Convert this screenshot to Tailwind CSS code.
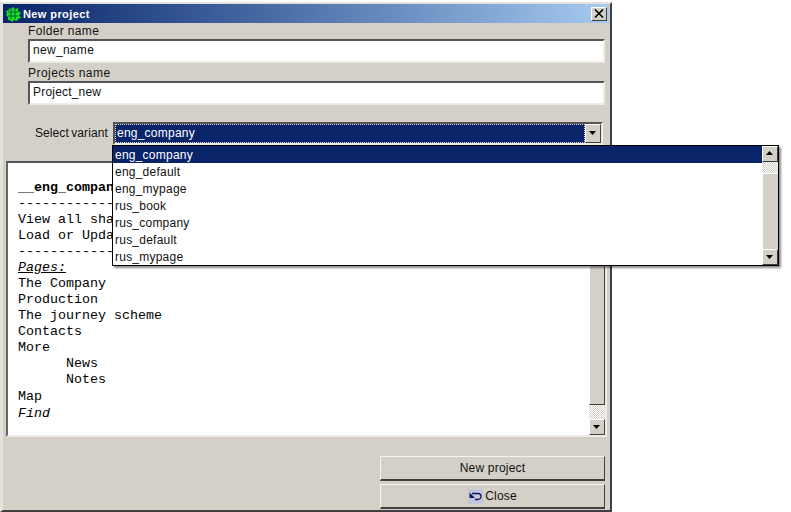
<!DOCTYPE html>
<html><head><meta charset="utf-8"><script src="https://cdn.jsdelivr.net/npm/@tailwindcss/browser@4"></script></head>
<body class="bg-white">
<div class="relative w-[791px] h-[512px] overflow-hidden bg-white font-['Liberation_Sans',sans-serif] text-[12px] text-[#111]">
  <div class="w-[612px] h-[512px] pt-[2px]">
    <div class="w-[612px] h-[510px] flex flex-col bg-[#d4d0c8] border-t-2 border-l-[3px] border-r-2 border-b-2 border-t-[#e4e2dc] border-l-[#e4e2dc] border-r-[#404040] border-b-[#404040] pr-[1px]">
      <div class="h-[19px] shrink-0 flex items-center bg-gradient-to-r from-[#0a246a] to-[#a6caf0] pl-[2px] pr-[2px] text-white font-bold text-[11px]">
        <svg width="16" height="16" viewBox="0 0 16 16" class="shrink-0 mt-[1px]"><path d="M4 2l2 1 2-2 2 2 3-1 0 3 3 2-2 2 2 3-3 1-1 2-3-1-2 2-2-2-2 0 0-3-2-2 1-2-1-2 3-1z" fill="#18e018"/><path d="M6 3v10M10 3v10M3 6h10M3 10h10" stroke="#064" stroke-width="1.1" fill="none"/></svg>
        <span class="ml-[2px] pt-[1px] tracking-[0.4px]">New project</span>
        <span class="ml-auto w-[16px] h-[14px] bg-[#d4d0c8] border border-t-white border-l-white border-r-[#404040] border-b-[#404040] flex items-center justify-center">
          <svg width="10" height="9" viewBox="0 0 10 9"><path d="M1 0.5l8 8M9 0.5l-8 8" stroke="#000" stroke-width="1.6"/></svg>
        </span>
      </div>
      <div class="ml-[25px] mr-[3px] h-[15px] mt-[1px] leading-[15px] tracking-[0.35px]">Folder name</div>
      <div class="ml-[25px] mr-[4px] h-[24px] shrink-0 bg-white border-2 border-t-[#555] border-l-[#555] border-r-[#eeece6] border-b-[#eeece6] pl-[3px] leading-[19px] tracking-[0.3px]">new_name</div>
      <div class="ml-[25px] mr-[3px] h-[15px] mt-[2px] pt-[1px] leading-[15px] tracking-[0.45px]">Projects name</div>
      <div class="ml-[25px] mr-[4px] h-[24px] mt-[1px] shrink-0 bg-white border-2 border-t-[#555] border-l-[#555] border-r-[#eeece6] border-b-[#eeece6] pl-[3px] leading-[19px] tracking-[0.2px]">Project_new</div>
      <div class="flex items-center mt-[16px] h-[24px] shrink-0">
        <span class="ml-[32px] w-[78px] tracking-[0.08px] [word-spacing:-1px]">Select variant</span>
        <div class="w-[490px] h-[23px] flex bg-[#e8e6e0] border-2 border-t-[#555] border-l-[#555] border-r-[#eeece6] border-b-[#eeece6]">
          <div class="flex-1 bg-[#0a246a] text-white pl-[1px] leading-[17px] tracking-[0.23px] border border-dotted border-[#ddd]">eng_company</div>
          <div class="w-[16px] bg-[#d4d0c8] border border-t-white border-l-white border-r-[#404040] border-b-[#404040] flex items-center justify-center"><svg width="8" height="5" viewBox="0 0 8 5"><path d="M0 0h7L3.5 4z" fill="#000"/></svg></div>
        </div>
      </div>
      <div class="mt-[16px] ml-[3px] mr-[2px] h-[276px] shrink-0 flex bg-white border-2 border-t-[#555] border-l-[#666] border-r-[#eeece6] border-b-[#eeece6] font-['Liberation_Mono',monospace] text-[13.33px] leading-[16px] text-black">
        <div class="flex-1 pl-[10px] pt-[17px] overflow-hidden">
          <div class="font-bold">__eng_company</div>
          <div>-----------------</div>
          <div>View all sha</div>
          <div>Load or Upda</div>
          <div>-----------------</div>
          <div class="italic underline">Pages:</div>
          <div>The Company</div>
          <div>Production</div>
          <div>The journey scheme</div>
          <div>Contacts</div>
          <div>More</div>
          <div class="pl-[48px]">News</div>
          <div class="pl-[48px]">Notes</div>
          <div class="mt-[1px]">Map</div>
          <div class="italic mt-[1px]">Find</div>
        </div>
        <div class="w-[16px] flex flex-col bg-[repeating-conic-gradient(#d4d0c8_0_25%,#fff_0_50%)] bg-[length:2px_2px]">
          <div class="h-[242px] bg-[#d4d0c8] border border-t-white border-l-white border-r-[#404040] border-b-[#404040]"></div>
          <div class="mt-auto h-[16px] bg-[#d4d0c8] border border-t-white border-l-white border-r-[#404040] border-b-[#404040] flex items-center justify-center"><svg width="8" height="5" viewBox="0 0 8 5"><path d="M0 0h7L3.5 4z" fill="#000"/></svg></div>
        </div>
      </div>
      <div class="flex flex-col items-end gap-[3px] mt-[19px] mr-[4px]">
        <div class="w-[225px] h-[25px] bg-[#d4d0c8] border border-t-[#f4f3ef] border-l-[#f4f3ef] border-r-[#404040] border-b-[#404040] border-b-2 flex items-center justify-center tracking-[0.2px]">New project</div>
        <div class="w-[225px] h-[25px] bg-[#d4d0c8] border border-t-[#f4f3ef] border-l-[#f4f3ef] border-r-[#404040] border-b-[#404040] border-b-2 flex items-center justify-center tracking-[0.2px] gap-[2px]">
          <svg width="15" height="15" viewBox="0 0 15 15"><rect width="15" height="15" fill="#c4c6da"/><path d="M4 4.5h6a2.6 2.6 0 0 1 0 6H7" stroke="#0a1a60" stroke-width="1.3" fill="none"/><path d="M1.5 3.5v5.5h5.5z" fill="#0a1a60"/></svg>
          <span>Close</span>
        </div>
      </div>
    </div>
  </div>
  <div class="absolute left-[112px] top-[145px] w-[667px] h-[121px] flex bg-white border border-black shadow-[2px_2px_2px_rgba(0,0,0,0.45)] tracking-[0.23px] leading-[17px]">
    <div class="flex-1 flex flex-col">
      <div class="h-[17px] pt-[1px] bg-[#0a246a] text-white pl-[2px]">eng_company</div>
      <div class="h-[17px] pt-[1px] pl-[2px]">eng_default</div>
      <div class="h-[17px] pt-[1px] pl-[2px]">eng_mypage</div>
      <div class="h-[17px] pt-[1px] pl-[2px]">rus_book</div>
      <div class="h-[17px] pt-[1px] pl-[2px]">rus_company</div>
      <div class="h-[17px] pt-[1px] pl-[2px]">rus_default</div>
      <div class="h-[17px] pt-[1px] pl-[2px]">rus_mypage</div>
    </div>
    <div class="w-[16px] flex flex-col bg-[repeating-conic-gradient(#d4d0c8_0_25%,#fff_0_50%)] bg-[length:2px_2px]">
      <div class="h-[16px] bg-[#d4d0c8] border border-t-white border-l-white border-r-[#404040] border-b-[#404040] flex items-center justify-center"><svg width="8" height="5" viewBox="0 0 8 5"><path d="M0 4h7L3.5 0z" fill="#000"/></svg></div>
      <div class="h-[77px] mt-[11px] bg-[#d4d0c8] border-t border-l border-t-white border-l-white"></div>
      <div class="mt-auto h-[16px] bg-[#d4d0c8] border border-t-white border-l-white border-r-[#404040] border-b-[#404040] flex items-center justify-center"><svg width="8" height="5" viewBox="0 0 8 5"><path d="M0 0h7L3.5 4z" fill="#000"/></svg></div>
    </div>
  </div>
</div>
</body></html>
